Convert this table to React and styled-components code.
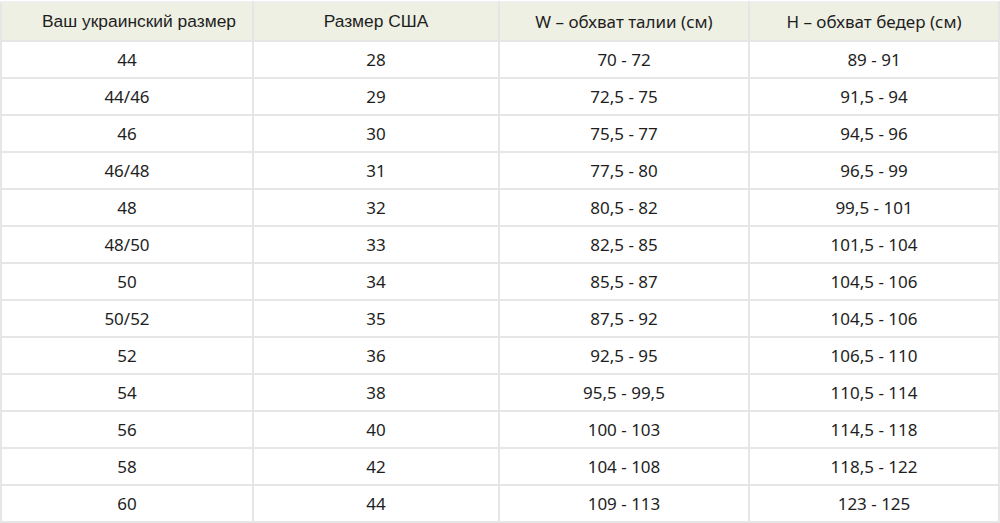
import React from "react";
import styled, { createGlobalStyle } from "styled-components";

const Global = createGlobalStyle`
  html, body { margin: 0; padding: 0; background: #fff; }
`;

const Table = styled.table`
  width: 998px;
  margin-top: 1px;
  border-collapse: collapse;
  table-layout: fixed;
  color: #1e1e1e;
`;

const Th = styled.th`
  height: 37px;
  padding: 0 0 0 ${(p) => p.$indent || 0}px;
  background: #eef0e4;
  border: 2px solid #e6e6e6;
  border-top-color: #efefef;
  font-weight: 400;
  font-size: ${(p) => (p.$helv ? 17.4 : 17)}px;
  text-align: center;
  font-family: ${(p) => (p.$helv ? '"Liberation Sans", Arial, sans-serif' : '"Noto Sans", "Open Sans", sans-serif')};
`;

const Td = styled.td`
  height: 35px;
  padding: 0;
  border: 2px solid #e6e6e6;
  text-align: center;
  font-size: 17px;
  font-family: "Noto Sans", "Open Sans", sans-serif;
`;

const cols = [252, 246, 250, 250];

const rows = [
  ["44", "28", "70 - 72", "89 - 91"],
  ["44/46", "29", "72,5 - 75", "91,5 - 94"],
  ["46", "30", "75,5 - 77", "94,5 - 96"],
  ["46/48", "31", "77,5 - 80", "96,5 - 99"],
  ["48", "32", "80,5 - 82", "99,5 - 101"],
  ["48/50", "33", "82,5 - 85", "101,5 - 104"],
  ["50", "34", "85,5 - 87", "104,5 - 106"],
  ["50/52", "35", "87,5 - 92", "104,5 - 106"],
  ["52", "36", "92,5 - 95", "106,5 - 110"],
  ["54", "38", "95,5 - 99,5", "110,5 - 114"],
  ["56", "40", "100 - 103", "114,5 - 118"],
  ["58", "42", "104 - 108", "118,5 - 122"],
  ["60", "44", "109 - 113", "123 - 125"],
];

export default function App() {
  return (
    <>
      <Global />
      <Table>
        <colgroup>
          {cols.map((w, i) => (
            <col key={i} style={{ width: w }} />
          ))}
        </colgroup>
        <thead>
          <tr>
            <Th $helv $indent={24}>Ваш украинский размер</Th>
            <Th $helv>Размер США</Th>
            <Th>W – обхват талии (см)</Th>
            <Th>H – обхват бедер (см)</Th>
          </tr>
        </thead>
        <tbody>
          {rows.map((r, i) => (
            <tr key={i}>
              {r.map((c, j) => (
                <Td key={j}>{c}</Td>
              ))}
            </tr>
          ))}
        </tbody>
      </Table>
    </>
  );
}
